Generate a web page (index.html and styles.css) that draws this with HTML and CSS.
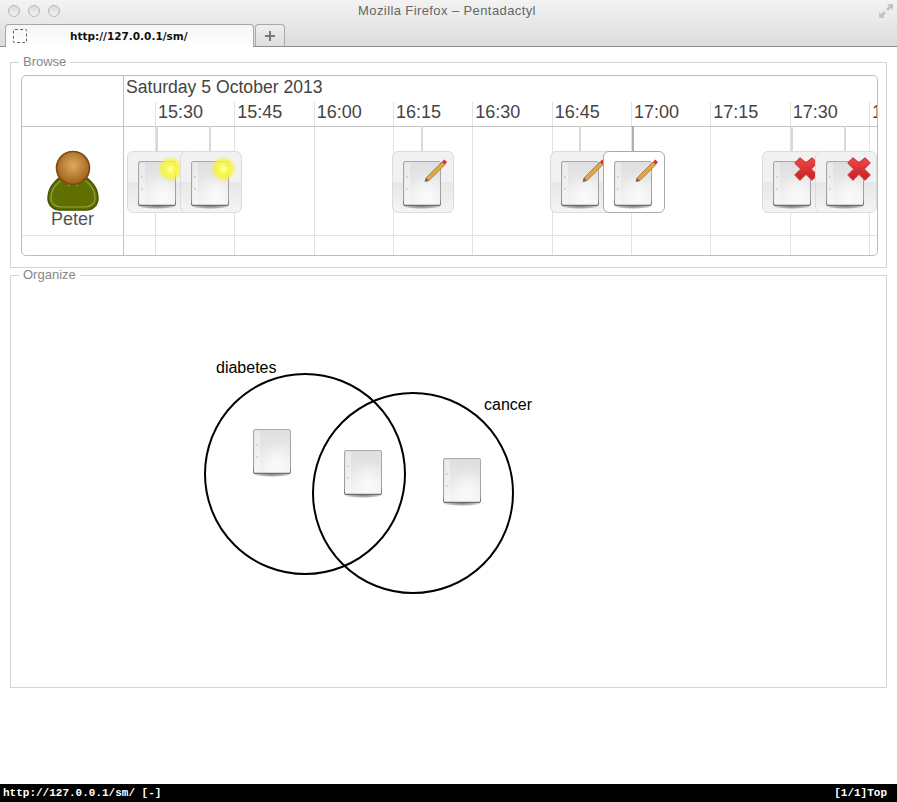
FILE: index.html
```html
<!DOCTYPE html>
<html lang="en">
<head>
  <meta charset="UTF-8">
  <title>Mozilla Firefox - Pentadactyl</title>
  <link rel="stylesheet" href="styles.css">
</head>
<body>
  <svg class="defs" width="0" height="0">
    <defs>
      <linearGradient id="page" x1="0" y1="0" x2="0" y2="1">
        <stop offset="0" stop-color="#dedede"/>
        <stop offset="1" stop-color="#f2f2f2"/>
      </linearGradient>
      <radialGradient id="page-shine" cx="0.65" cy="0.8" r="0.55">
        <stop offset="0" stop-color="#fbfbfb"/>
        <stop offset="1" stop-color="#fbfbfb" stop-opacity="0"/>
      </radialGradient>
      <linearGradient id="page-edge" x1="0" y1="0" x2="0" y2="1">
        <stop offset="0" stop-color="#aaa"/>
        <stop offset="0.85" stop-color="#a0a0a0"/>
        <stop offset="1" stop-color="#666"/>
      </linearGradient>
      <radialGradient id="drop" cx="0.5" cy="0.5" r="0.5">
        <stop offset="0" stop-color="#555" stop-opacity="0.8"/>
        <stop offset="0.7" stop-color="#777" stop-opacity="0.5"/>
        <stop offset="1" stop-color="#777" stop-opacity="0"/>
      </radialGradient>
      <radialGradient id="glow">
        <stop offset="0" stop-color="#ffffd8"/>
        <stop offset="0.25" stop-color="#fdfb60"/>
        <stop offset="0.65" stop-color="#f8f52e" stop-opacity="0.8"/>
        <stop offset="1" stop-color="#f8f52e" stop-opacity="0"/>
      </radialGradient>
      <linearGradient id="cross" x1="0" y1="0" x2="0" y2="1">
        <stop offset="0" stop-color="#ee4a4a"/>
        <stop offset="1" stop-color="#c81e1e"/>
      </linearGradient>
      <radialGradient id="head" cx="0.5" cy="0.42" r="0.55">
        <stop offset="0" stop-color="#dfa862"/>
        <stop offset="0.75" stop-color="#b0752a"/>
        <stop offset="1" stop-color="#9a6420"/>
      </radialGradient>

      <symbol id="doc" viewBox="0 0 40 48">
        <ellipse cx="20" cy="45" rx="20" ry="3" fill="url(#drop)"/>
        <rect x="1.500" y="0.500" width="37" height="44" rx="1.500" fill="url(#page)" stroke="url(#page-edge)"/>
        <rect x="2" y="1" width="36" height="43" fill="url(#page-shine)"/>
        <rect x="3" y="2" width="5" height="41" fill="#fff" opacity="0.35"/>
        <path d="M2 44.300h36" stroke="#6e6e6e" stroke-width="1.300"/>
        <circle cx="5" cy="16" r="0.700" fill="#aaa"/>
        <circle cx="5" cy="28" r="0.700" fill="#aaa"/>
      </symbol>

      <symbol id="pencil" viewBox="0 0 62 62">
        <path d="M34 27l16-16 3 2.600-16 16-4 1z" fill="#e2a648" stroke="#94641f" stroke-width="0.700"/>
        <path d="M34 27l3 2.600-4 1z" fill="#666"/>
        <path d="M50 11l2-2.500 3 2.600-2 2.500z" fill="#dd3030"/>
      </symbol>

      <symbol id="cross-mark" viewBox="0 0 62 62">
        <path d="M38 7l6 5 6-5 5 5-6 6 6 6-5 5-6-6-6 6-5-5 6-6-6-6z" fill="url(#cross)" stroke="#d43a3a" stroke-width="1.200" stroke-linejoin="round"/>
      </symbol>

      <symbol id="light" viewBox="0 0 62 62">
        <circle cx="43.500" cy="18" r="13" fill="url(#glow)"/>
      </symbol>
    </defs>
  </svg>

  <div class="app">
    <header class="chrome">
      <div class="titlebar">
        <div class="lights"><i></i><i></i><i></i></div>
        <span class="window-title">Mozilla Firefox – Pentadactyl</span>
        <svg class="resize" width="16" height="16" viewBox="0 0 16 16">
          <path d="M15 1h-6l2 2-3 3 2 2 3-3 2 2zM1 15h6l-2-2 3-3-2-2-3 3-2-2z" fill="#c4c4c4"/>
        </svg>
      </div>
      <div class="tabs">
        <div class="tab">
          <span class="favicon"></span>
          <span class="tab-title">http://127.0.0.1/sm/</span>
        </div>
        <div class="tab-new">
          <svg width="12" height="12" viewBox="0 0 12 12"><path d="M6 1v10M1 6h10" stroke="#777" stroke-width="2"/></svg>
        </div>
      </div>
    </header>

    <main class="page">
      <fieldset class="group browse">
        <legend>Browse</legend>
        <div class="timeline">
          <div class="corner"></div>
          <div class="head">
            <div class="date">Saturday 5 October 2013</div>
            <div class="ticks labels">
              <span>15:30</span><span>15:45</span><span>16:00</span><span>16:15</span><span>16:30</span>
              <span>16:45</span><span>17:00</span><span>17:15</span><span>17:30</span><span>17:45</span>
            </div>
          </div>

          <div class="person">
            <svg width="52" height="62" viewBox="0 0 52 62">
              <path d="M26 24c-14 0-25 12-25 24 0 8 6 12 12 12h26c6 0 12-4 12-12 0-12-11-24-25-24z" fill="#5f7000" stroke="#465200" stroke-width="1.500"/>
              <path d="M26 27c-12 0-22 10-22 21 0 6 5 9 10 9h24c5 0 10-3 10-9 0-11-10-21-22-21z" fill="none" stroke="#94a04a" stroke-width="1.200"/>
              <path d="M19 30l3 7 2-8zM33 30l-3 7-2-8z" fill="#a4ae5e"/>
              <circle cx="26" cy="18" r="16.500" fill="url(#head)" stroke="#7a4a10" stroke-width="1.600"/>
            </svg>
            <span>Peter</span>
          </div>

          <div class="lane">
            <div class="ticks"><span></span><span></span><span></span><span></span><span></span><span></span><span></span><span></span><span></span><span></span></div>

            <div class="item" style="left: 3px">
              <svg class="doc" width="40" height="48"><use href="#doc"/></svg>
              <svg class="badge" width="62" height="62"><use href="#light"/></svg>
            </div>
            <div class="item" style="left: 56px">
              <svg class="doc" width="40" height="48"><use href="#doc"/></svg>
              <svg class="badge" width="62" height="62"><use href="#light"/></svg>
            </div>
            <div class="item" style="left: 268px">
              <svg class="doc" width="40" height="48"><use href="#doc"/></svg>
              <svg class="badge" width="62" height="62"><use href="#pencil"/></svg>
            </div>
            <div class="item" style="left: 426px">
              <svg class="doc" width="40" height="48"><use href="#doc"/></svg>
              <svg class="badge" width="62" height="62"><use href="#pencil"/></svg>
            </div>
            <div class="item selected" style="left: 479px">
              <svg class="doc" width="40" height="48"><use href="#doc"/></svg>
              <svg class="badge" width="62" height="62"><use href="#pencil"/></svg>
            </div>
            <div class="item" style="left: 638px">
              <svg class="doc" width="40" height="48"><use href="#doc"/></svg>
              <svg class="badge" width="62" height="62"><use href="#cross-mark"/></svg>
            </div>
            <div class="item" style="left: 691px">
              <svg class="doc" width="40" height="48"><use href="#doc"/></svg>
              <svg class="badge" width="62" height="62"><use href="#cross-mark"/></svg>
            </div>
          </div>

          <div class="foot-corner"></div>
          <div class="foot">
            <div class="ticks"><span></span><span></span><span></span><span></span><span></span><span></span><span></span><span></span><span></span><span></span></div>
          </div>
        </div>
      </fieldset>

      <fieldset class="group organize">
        <legend>Organize</legend>
        <div class="venn">
          <svg class="circles" width="874" height="404">
            <circle cx="294" cy="192" r="100"/>
            <circle cx="402" cy="211" r="100"/>
          </svg>
          <span class="tag" style="left: 205px; top: 77px">diabetes</span>
          <span class="tag" style="left: 473px; top: 114px">cancer</span>
          <svg class="note" style="left: 241px; top: 147px" width="40" height="48"><use href="#doc"/></svg>
          <svg class="note" style="left: 332px; top: 168px" width="40" height="48"><use href="#doc"/></svg>
          <svg class="note" style="left: 431px; top: 176px" width="40" height="48"><use href="#doc"/></svg>
        </div>
      </fieldset>
    </main>

    <footer class="status">
      <span>http://127.0.0.1/sm/ [-]</span>
      <span>[1/1]Top</span>
    </footer>
  </div>
</body>
</html>
```

FILE: styles.css
```css
html, body {
  margin: 0;
  height: 100%;
}
body {
  font-family: "Liberation Sans", Arial, sans-serif;
  background: #fff;
  overflow: hidden;
}
.defs {
  position: absolute;
}
.app {
  display: flex;
  flex-direction: column;
  height: 100vh;
}

/* Browser chrome */
.chrome {
  height: 47px;
  box-sizing: border-box;
  flex: none;
  background: linear-gradient(#f3f3f3, #e9e9e9 45%, #dcdcdc);
  border-bottom: 1px solid #8f8f8f;
}
.titlebar {
  height: 24px;
  display: flex;
  align-items: center;
  justify-content: center;
  position: relative;
}
.lights {
  position: absolute;
  left: 8px;
  top: 5px;
  display: flex;
  gap: 8px;
}
.lights i {
  width: 10px;
  height: 10px;
  border: 1px solid #b5b5b5;
  border-radius: 50%;
  background: linear-gradient(#dcdcdc, #f2f2f2);
}
.window-title {
  font-size: 13px;
  color: #666;
  margin: -4px 0 0 -3px;
  letter-spacing: 0.4px;
}
.resize {
  position: absolute;
  right: 3px;
  top: 3px;
}
.tabs {
  display: flex;
  padding-left: 5px;
  height: 23px;
}
.tab {
  width: 249px;
  height: 23px;
  box-sizing: border-box;
  border: 1px solid #a8a8a8;
  border-bottom: none;
  border-radius: 4px 4px 0 0;
  background: linear-gradient(#f6f6f6, #fff);
  display: flex;
  align-items: center;
  position: relative;
  z-index: 1;
}
.favicon {
  width: 12px;
  height: 12px;
  margin-left: 7px;
  border: 1px dashed #666;
  border-radius: 2px;
}
.tab-title {
  margin-left: 43px;
  font-family: "DejaVu Sans", sans-serif;
  font-size: 10.5px;
  font-weight: bold;
  color: #111;
}
.tab-new {
  width: 30px;
  height: 22px;
  margin-left: 1px;
  box-sizing: border-box;
  border: 1px solid #a8a8a8;
  border-bottom: none;
  border-radius: 4px 4px 0 0;
  background: linear-gradient(#efefef, #dedede);
  display: flex;
  align-items: center;
  justify-content: center;
}

/* Page */
.page {
  flex: 1;
  padding: 8px 10px 0;
}
.group {
  margin: 0;
  padding: 0;
  border: 1px solid #d4d4d4;
  position: relative;
}
.group legend {
  margin-left: 8px;
  padding: 0 4px;
  font-size: 13px;
  line-height: 14px;
  color: #888;
}
.browse {
  height: 213px;
  box-sizing: border-box;
}
.organize {
  height: 420px;
  box-sizing: border-box;
}

/* Timeline */
.timeline {
  display: grid;
  grid-template-columns: 102px 1fr;
  grid-template-rows: 51px 109px 19px;
  margin: 6px 8px 0 10px;
  border: 1px solid #bdbdbd;
  border-radius: 5px;
  overflow: hidden;
  color: #444;
}
.corner, .person, .foot-corner {
  border-right: 1px solid #c4c4c4;
}
.corner, .head {
  border-bottom: 1px solid #c4c4c4;
}
.person, .lane {
  border-bottom: 1px solid #e2e2e2;
}
.head {
  min-width: 0;
  display: flex;
  flex-direction: column;
}
.date {
  font-size: 17.6px;
  line-height: 21px;
  height: 25px;
  padding: 1px 0 0 2px;
}
.ticks {
  display: flex;
  height: 100%;
  padding-left: 31px;
  flex: 1;
  min-height: 0;
}
.ticks span {
  flex: 0 0 79.33px;
  box-sizing: border-box;
  border-left: 1px solid #e2e2e2;
}
.labels span {
  padding: 0 0 0 2px;
  font-size: 18px;
  line-height: 21px;
}
.person {
  display: flex;
  flex-direction: column;
  align-items: center;
  padding-top: 23px;
  box-sizing: border-box;
  font-size: 18px;
  color: #555;
}
.person svg {
  display: block;
}
.person span {
  margin-top: -3px;
  line-height: 20px;
}
.lane {
  position: relative;
  min-width: 0;
}
.foot {
  min-width: 0;
}

/* Items sitting on the time axis */
.item {
  position: absolute;
  top: 24px;
  width: 62px;
  height: 62px;
  box-sizing: border-box;
  border: 1px solid #dcdcdc;
  border-radius: 6px;
  background: linear-gradient(#f1f1f1 50%, #e7e7e7 50%, #f4f4f4);
}
.item::before {
  content: "";
  position: absolute;
  left: 28px;
  top: -26px;
  width: 2px;
  height: 25px;
  background: #d8d8d8;
}
.item.selected {
  background: #fff;
  border-color: #aaa;
}
.item.selected::before {
  background: #b0b0b0;
}
.doc {
  position: absolute;
  left: 9px;
  top: 9px;
}
.badge {
  position: absolute;
  left: -1px;
  top: -1px;
}

/* Venn diagram */
.venn {
  position: relative;
  height: 100%;
}
.circles {
  position: absolute;
  left: 0;
  top: 0;
}
.circles circle {
  fill: none;
  stroke: #000;
  stroke-width: 2;
}
.tag {
  position: absolute;
  font-size: 16px;
  line-height: 18px;
  color: #000;
}
.note {
  position: absolute;
}

/* Pentadactyl status line */
.status {
  flex: none;
  height: 18px;
  background: #000;
  color: #fff;
  font-family: "Liberation Mono", monospace;
  font-size: 11px;
  font-weight: bold;
  line-height: 18px;
  display: flex;
  justify-content: space-between;
  padding: 0 10px 0 3px;
}
```
